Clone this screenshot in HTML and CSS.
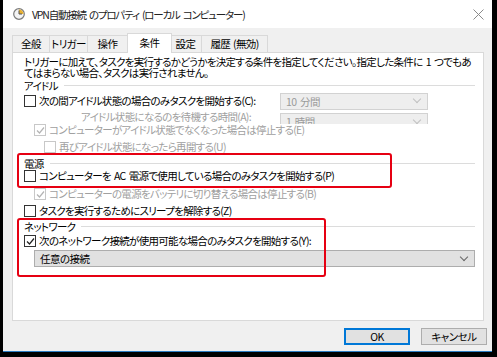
FILE: index.html
```html
<!DOCTYPE html>
<html lang="ja">
  <head>
    <meta charset="UTF-8" />
    <title>VPN自動接続 のプロパティ</title>
    <link rel="stylesheet" href="styles.css">
  </head>
  <body>
    <div class="window">
      <div class="titlebar">
        <svg class="app-icon" width="12" height="12" viewBox="0 0 12 12">
          <circle cx="6" cy="6" r="5.3" fill="#f4f4f4" stroke="#7a7a7a" stroke-width="1.2" />
          <path d="M6 6 L6 1.5 A4.5 4.5 0 0 1 10.5 6 Z" fill="#e8b030" />
          <path d="M6 2.5 V6 H9" fill="none" stroke="#555" stroke-width="1" />
        </svg>
        <span class="title">VPN自動接続 のプロパティ (ローカル コンピューター)</span>
        <svg class="close" width="11" height="11" viewBox="0 0 11 11">
          <path d="M0.5 0.5 L10.5 10.5 M10.5 0.5 L0.5 10.5" stroke="#8a8a8a" stroke-width="1" />
        </svg>
      </div>

      <div class="dialog-body">
        <div class="tabs">
          <div class="tab w38">全般</div>
          <div class="tab w38">トリガー</div>
          <div class="tab w40">操作</div>
          <div class="tab w42 active">条件</div>
          <div class="tab w34">設定</div>
          <div class="tab w66">履歴 (無効)</div>
        </div>

        <div class="panel">
          <p class="intro">トリガーに加えて、タスクを実行するかどうかを決定する条件を指定してください。指定した条件に 1 つでもあ<br>てはまらない場合、タスクは実行されません。</p>

          <div class="group-head"><span>アイドル</span><i></i></div>

          <div class="row h16">
            <span class="cb"></span>
            <span class="label">次の間アイドル状態の場合のみタスクを開始する(C):</span>
            <div class="combo disabled idle-combo">10 分間<b class="chev"></b></div>
          </div>

          <div class="row wait">
            <span class="label gray indent-wait">アイドル状態になるのを待機する時間(A):</span>
            <div class="combo disabled idle-combo low">1 時間<b class="chev"></b></div>
          </div>

          <div class="row h12 lvl1 cover">
            <span class="cb disabled checked"><svg width="9" height="9" viewBox="0 0 9 9"><path d="M1 4.5 L3.5 7 L8 1.5" /></svg></span>
            <span class="label gray">コンピューターがアイドル状態でなくなった場合は停止する(E)</span>
          </div>

          <div class="row h12 lvl2 mt5">
            <span class="cb disabled"></span>
            <span class="label gray">再びアイドル状態になったら再開する(U)</span>
          </div>

          <div class="group-head mt4"><span>電源</span><i></i></div>

          <div class="row h12 mt1">
            <span class="cb"></span>
            <span class="label">コンピューターを AC 電源で使用している場合のみタスクを開始する(P)</span>
          </div>

          <div class="row h12 lvl1 mt6">
            <span class="cb disabled checked"><svg width="9" height="9" viewBox="0 0 9 9"><path d="M1 4.5 L3.5 7 L8 1.5" /></svg></span>
            <span class="label gray">コンピューターの電源をバッテリに切り替える場合は停止する(B)</span>
          </div>

          <div class="row h12 mt5">
            <span class="cb"></span>
            <span class="label">タスクを実行するためにスリープを解除する(Z)</span>
          </div>

          <div class="group-head mt3"><span>ネットワーク</span><i></i></div>

          <div class="row h12 mt3">
            <span class="cb checked"><svg width="9" height="9" viewBox="0 0 9 9"><path d="M1 4.5 L3.5 7 L8 1.5" /></svg></span>
            <span class="label">次のネットワーク接続が使用可能な場合のみタスクを開始する(Y):</span>
          </div>

          <div class="combo net-combo">任意の接続<b class="chev"></b></div>

          <!-- annotation boxes -->
          <div class="mark mark-power"></div>
          <div class="mark mark-network"></div>
        </div>

        <div class="buttons">
          <button class="btn default">OK</button>
          <button class="btn">キャンセル</button>
        </div>
      </div>
    </div>
  </body>
</html>
```

FILE: styles.css
```css
/* Reset and base */
* {
  margin: 0;
  padding: 0;
  box-sizing: border-box;
}

body {
  background: #000;
  font-family: "Noto Sans CJK JP", "Noto Sans", sans-serif;
  font-size: 10.5px;
  font-feature-settings: "palt";
  color: #000;
  width: 497px;
  height: 357px;
  overflow: hidden;
}

.window {
  width: 489px;
  height: 352px;
  margin-left: 3px;
  background: #f0f0f0;
  border-bottom: 1px solid #2b7bc1;
}

/* Title bar */
.titlebar {
  height: 28px;
  background: #fff;
  display: flex;
  align-items: center;
  padding-left: 10px;
  padding-right: 8px;
}

.app-icon {
  margin-right: 7px;
}

.title {
  flex: 1;
  font-size: 10.5px;
  color: #222;
  letter-spacing: -1.2px;
  word-spacing: 2px;
}

/* Dialog */
.dialog-body {
  padding: 5px 8px 0 9px;
}

.tabs {
  display: flex;
  align-items: flex-end;
  height: 19px;
}

.tab {
  height: 17px;
  border: 1px solid #d9d9d9;
  border-bottom: none;
  border-left: none;
  background: #f0f0f0;
  text-align: center;
  line-height: 16px;
  white-space: nowrap;
  letter-spacing: -0.6px;
  word-spacing: 1px;
}

.tab:first-child {
  border-left: 1px solid #d9d9d9;
}

.tab.active {
  height: 20px;
  background: #fff;
  border-left: 1px solid #d9d9d9;
  margin: 0 -2px -1px -1px;
  position: relative;
  z-index: 2;
  line-height: 18px;
}

.w38 { width: 38px; }
.w40 { width: 40px; }
.w42 { width: 45px; }
.w34 { width: 32px; }
.w66 { width: 66px; }

.panel {
  position: relative;
  height: 269px;
  width: 472px;
  background: #fff;
  border: 1px solid #d9d9d9;
  padding: 3px 10px 0 11px;
}

.intro {
  line-height: 11px;
  letter-spacing: -0.7px;
  word-spacing: 1.5px;
  white-space: nowrap;
  margin-bottom: 1px;
}

.group-head {
  display: flex;
  align-items: center;
  height: 12px;
  width: 451px;
}

.group-head span {
  letter-spacing: -0.7px;
  margin-right: 6px;
}

.group-head i {
  flex: 1;
  height: 1px;
  background: #dcdcdc;
}

.row {
  display: flex;
  align-items: center;
  position: relative;
  white-space: nowrap;
}

.h16 { height: 16px; margin-top: 2px; }
.h12 { height: 12px; }
.wait { height: 15px; overflow: hidden; align-items: flex-start; }
.cover { background: #fff; }
.lvl1 { padding-left: 10px; }
.lvl2 { padding-left: 20px; }
.mt1 { margin-top: 1px; }
.mt3 { margin-top: 3px; }
.mt4 { margin-top: 4px; }
.mt5 { margin-top: 5px; }
.mt6 { margin-top: 6px; }

.label {
  letter-spacing: -0.7px;
  word-spacing: 1.5px;
  line-height: 12px;
}

.gray {
  color: #a0a0a0;
}

.indent-wait {
  padding-left: 57px;
  padding-top: 2px;
}

/* Checkboxes */
.cb {
  width: 12px;
  height: 12px;
  border: 1px solid #333;
  background: #fff;
  margin-right: 3px;
  flex-shrink: 0;
  display: flex;
  align-items: center;
  justify-content: center;
}

.cb svg path {
  fill: none;
  stroke: #222;
  stroke-width: 1.2;
}

.cb.disabled {
  border-color: #c8c8c8;
}

.cb.disabled svg path {
  stroke: #b4b4b4;
}

/* Combo boxes */
.combo {
  position: relative;
  display: flex;
  align-items: center;
  background: #e1e1e1;
  border: 1px solid #adadad;
  padding-left: 5px;
  letter-spacing: -0.5px;
  word-spacing: 1.5px;
}

.combo.disabled {
  background: #eeeeee;
  border-color: #d2d2d2;
  color: #9a9a9a;
}

.idle-combo {
  position: absolute;
  left: 256px;
  width: 148px;
  height: 17px;
}

.idle-combo.low {
  top: 4px;
}

.net-combo {
  margin-top: 3px;
  margin-left: 10px;
  width: 441px;
  height: 17px;
}

.chev {
  position: absolute;
  right: 7px;
  top: 50%;
  width: 6px;
  height: 6px;
  margin-top: -5px;
  border-right: 1px solid #666;
  border-bottom: 1px solid #666;
  transform: rotate(45deg);
}

.disabled .chev {
  border-color: #c0c0c0;
}

/* Red annotation boxes */
.mark {
  position: absolute;
  border: 2px solid #e60012;
  border-radius: 3px;
}

.mark-power {
  left: 4px;
  top: 100px;
  width: 375px;
  height: 35px;
}

.mark-network {
  left: 4px;
  top: 165px;
  width: 309px;
  height: 59px;
}

/* Buttons */
.buttons {
  display: flex;
  justify-content: flex-end;
  gap: 11px;
  margin-top: 7px;
  margin-right: -3px;
}

.btn {
  width: 66px;
  height: 17px;
  background: #e1e1e1;
  border: 1px solid #adadad;
  font-family: inherit;
  font-size: 10.5px;
  font-feature-settings: "palt";
  letter-spacing: -0.5px;
  line-height: 14px;
  color: #000;
}

.btn.default {
  border: 2px solid #0078d7;
}
```
